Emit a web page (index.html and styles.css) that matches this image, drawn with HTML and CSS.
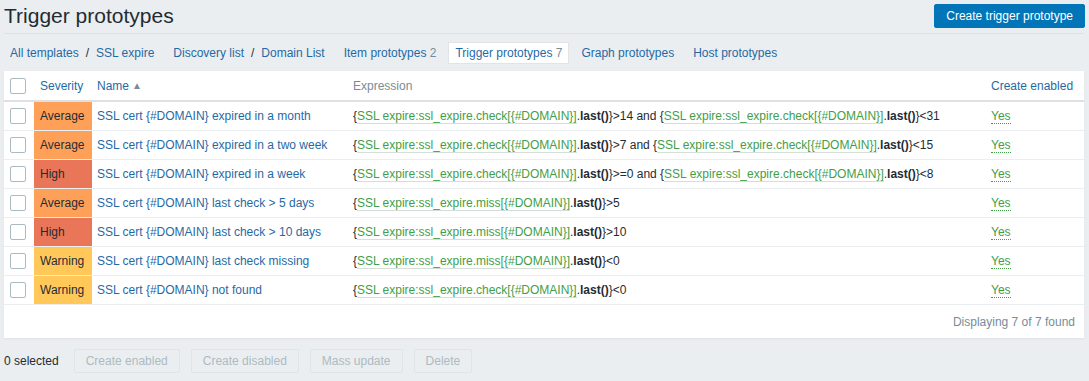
FILE: index.html
```html
<!DOCTYPE html>
<html lang="en">
<head>
    <meta charset="UTF-8">
    <title>Trigger prototypes</title>
    <link rel="stylesheet" href="styles.css">
</head>
<body>
    <div class="header">
        <h1>Trigger prototypes</h1>
        <button class="btn-primary">Create trigger prototype</button>
    </div>

    <div class="nav">
        <div class="nav-item">
            <a href="#">All templates</a><span class="sep">/</span><a href="#">SSL expire</a>
        </div>
        <div class="nav-item">
            <a href="#">Discovery list</a><span class="sep">/</span><a href="#">Domain List</a>
        </div>
        <div class="nav-item"><a href="#">Item prototypes</a> <sup>2</sup></div>
        <div class="nav-item selected"><span>Trigger prototypes</span> <sup>7</sup></div>
        <div class="nav-item"><a href="#">Graph prototypes</a></div>
        <div class="nav-item"><a href="#">Host prototypes</a></div>
    </div>

    <div class="list">
        <table>
            <colgroup>
                <col class="col-check">
                <col class="col-severity">
                <col class="col-name">
                <col>
                <col class="col-status">
            </colgroup>
            <thead>
                <tr>
                    <th class="cell-check"><span class="checkbox"></span></th>
                    <th class="cell-severity"><a href="#">Severity</a></th>
                    <th><a href="#">Name</a><span class="arrow">&#9650;</span></th>
                    <th class="plain">Expression</th>
                    <th><a href="#">Create enabled</a></th>
                </tr>
            </thead>
            <tbody>
                <tr>
                    <td class="cell-check"><span class="checkbox"></span></td>
                    <td class="cell-severity average">Average</td>
                    <td><a href="#">SSL cert {#DOMAIN} expired in a month</a></td>
                    <td>{<span class="key">SSL expire:ssl_expire.check[{#DOMAIN}]</span>.<b>last()</b>}&gt;14 and {<span class="key">SSL expire:ssl_expire.check[{#DOMAIN}]</span>.<b>last()</b>}&lt;31</td>
                    <td><span class="yes">Yes</span></td>
                </tr>
                <tr>
                    <td class="cell-check"><span class="checkbox"></span></td>
                    <td class="cell-severity average">Average</td>
                    <td><a href="#">SSL cert {#DOMAIN} expired in a two week</a></td>
                    <td>{<span class="key">SSL expire:ssl_expire.check[{#DOMAIN}]</span>.<b>last()</b>}&gt;7 and {<span class="key">SSL expire:ssl_expire.check[{#DOMAIN}]</span>.<b>last()</b>}&lt;15</td>
                    <td><span class="yes">Yes</span></td>
                </tr>
                <tr>
                    <td class="cell-check"><span class="checkbox"></span></td>
                    <td class="cell-severity high">High</td>
                    <td><a href="#">SSL cert {#DOMAIN} expired in a week</a></td>
                    <td>{<span class="key">SSL expire:ssl_expire.check[{#DOMAIN}]</span>.<b>last()</b>}&gt;=0 and {<span class="key">SSL expire:ssl_expire.check[{#DOMAIN}]</span>.<b>last()</b>}&lt;8</td>
                    <td><span class="yes">Yes</span></td>
                </tr>
                <tr>
                    <td class="cell-check"><span class="checkbox"></span></td>
                    <td class="cell-severity average">Average</td>
                    <td><a href="#">SSL cert {#DOMAIN} last check &gt; 5 days</a></td>
                    <td>{<span class="key">SSL expire:ssl_expire.miss[{#DOMAIN}]</span>.<b>last()</b>}&gt;5</td>
                    <td><span class="yes">Yes</span></td>
                </tr>
                <tr>
                    <td class="cell-check"><span class="checkbox"></span></td>
                    <td class="cell-severity high">High</td>
                    <td><a href="#">SSL cert {#DOMAIN} last check &gt; 10 days</a></td>
                    <td>{<span class="key">SSL expire:ssl_expire.miss[{#DOMAIN}]</span>.<b>last()</b>}&gt;10</td>
                    <td><span class="yes">Yes</span></td>
                </tr>
                <tr>
                    <td class="cell-check"><span class="checkbox"></span></td>
                    <td class="cell-severity warning">Warning</td>
                    <td><a href="#">SSL cert {#DOMAIN} last check missing</a></td>
                    <td>{<span class="key">SSL expire:ssl_expire.miss[{#DOMAIN}]</span>.<b>last()</b>}&lt;0</td>
                    <td><span class="yes">Yes</span></td>
                </tr>
                <tr>
                    <td class="cell-check"><span class="checkbox"></span></td>
                    <td class="cell-severity warning">Warning</td>
                    <td><a href="#">SSL cert {#DOMAIN} not found</a></td>
                    <td>{<span class="key">SSL expire:ssl_expire.check[{#DOMAIN}]</span>.<b>last()</b>}&lt;0</td>
                    <td><span class="yes">Yes</span></td>
                </tr>
            </tbody>
        </table>
        <div class="paging">Displaying 7 of 7 found</div>
    </div>

    <div class="actions">
        <span class="selected-count">0 selected</span>
        <button class="btn-alt" disabled>Create enabled</button>
        <button class="btn-alt" disabled>Create disabled</button>
        <button class="btn-alt" disabled>Mass update</button>
        <button class="btn-alt" disabled>Delete</button>
    </div>
</body>
</html>
```

FILE: styles.css
```css
* {
    margin: 0;
    padding: 0;
    box-sizing: border-box;
}

body {
    background: #ebeef0;
    color: #1f2c33;
    font-family: 'Liberation Sans', Arial, sans-serif;
    font-size: 12px;
    line-height: 14px;
    padding: 0 5px 0 4px;
}

a {
    color: #1f6aa5;
    text-decoration: none;
}

.header {
    display: flex;
    justify-content: space-between;
    align-items: center;
    height: 34px;
    border-bottom: 1px solid #dde1e4;
    padding-bottom: 2px;
}

.header h1 {
    font-size: 21px;
    font-weight: normal;
    line-height: 24px;
    color: #1f2c33;
}

.btn-primary {
    font-family: inherit;
    font-size: 12px;
    height: 24px;
    padding: 0 11px;
    margin-right: -1px;
    background: #0275b8;
    color: #fff;
    border: 1px solid #0275b8;
    border-radius: 2px;
}

.nav {
    display: flex;
    align-items: center;
    gap: 5px;
    margin-top: 8px;
    margin-left: -1px;
    height: 22px;
}

.nav-item {
    height: 22px;
    line-height: 20px;
    padding: 0 6px;
    border: 1px solid transparent;
    white-space: nowrap;
}

.nav-item.selected {
    background: #fff;
    border-color: #dfe4e7;
    color: #1f6aa5;
}

.nav-item sup {
    font-size: 12px;
    vertical-align: baseline;
    color: #768d99;
}

.sep {
    color: #1f2c33;
    margin: 0 7px;
}

.list {
    margin-top: 7px;
    background: #fff;
    box-shadow: 0 1px 2px rgba(0, 0, 0, 0.06);
}

table {
    width: 100%;
    table-layout: fixed;
    border-collapse: collapse;
}

.col-check { width: 30px; }
.col-severity { width: 58px; }
.col-name { width: 256px; }
.col-status { width: 98px; }

th {
    height: 30px;
    text-align: left;
    font-weight: normal;
    padding: 0 5px;
    border-bottom: 2px solid #dde1e4;
    white-space: nowrap;
}

th.plain {
    color: #768d99;
}

.arrow {
    color: #768d99;
    font-size: 10px;
    margin-left: 3px;
    vertical-align: 1px;
}

td {
    height: 29px;
    padding: 0 5px;
    border-bottom: 1px solid #ebeef0;
    white-space: nowrap;
}

.cell-check {
    padding-left: 6px;
}

.cell-severity {
    padding-left: 6px;
}

.average { background: #ffa059; }
.high { background: #e97659; }
.warning { background: #ffc859; }

.checkbox {
    display: block;
    width: 16px;
    height: 16px;
    border: 1px solid #acbbc2;
    border-radius: 2px;
    background: #fff;
}

.key {
    color: #429e47;
    border-bottom: 1px solid #d6ded9;
}

td b {
    font-weight: bold;
}

.yes {
    color: #429e47;
    border-bottom: 1px dotted #429e47;
}

.paging {
    text-align: right;
    color: #768d99;
    padding: 10px 9px 9px;
    height: 33px;
}

.actions {
    display: flex;
    align-items: center;
    margin-top: 11px;
}

.selected-count {
    margin-right: 15px;
}

.btn-alt {
    font-family: inherit;
    font-size: 12px;
    height: 24px;
    padding: 0 11px;
    margin-right: 11px;
    background: #ebeef0;
    color: #acbbc2;
    border: 1px solid #dfe4e7;
    border-radius: 2px;
}
```
